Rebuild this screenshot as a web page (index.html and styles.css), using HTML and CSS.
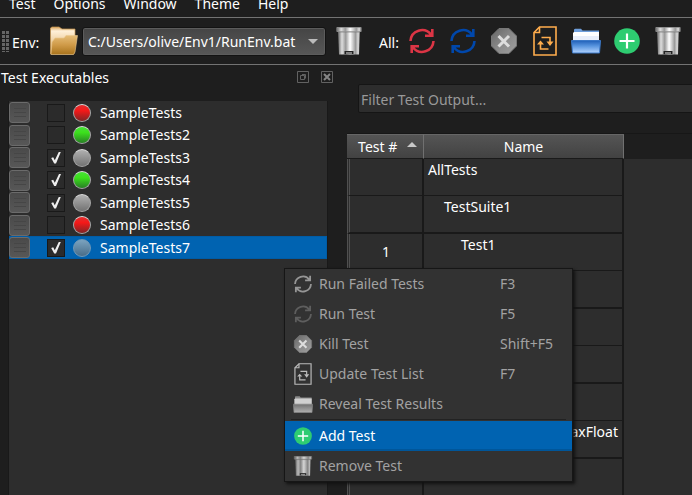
FILE: index.html
```html
<!DOCTYPE html>
<html lang="en">
<head>
<meta charset="utf-8">
<title>Test Runner</title>
<link rel="stylesheet" href="styles.css">
</head>
<body>
<svg class="defs" aria-hidden="true">
  <defs>
    <linearGradient id="metal"><stop offset="0" stop-color="#666"/><stop offset=".18" stop-color="#ddd"/><stop offset=".35" stop-color="#999"/><stop offset=".55" stop-color="#fff"/><stop offset=".8" stop-color="#999"/><stop offset=".92" stop-color="#ddd"/><stop offset="1" stop-color="#777"/></linearGradient>
    <linearGradient id="goldBack" x2="0" y2="1"><stop offset="0" stop-color="#d9a560"/><stop offset=".15" stop-color="#fff0d8"/><stop offset="1" stop-color="#d9a860"/></linearGradient>
    <linearGradient id="goldFront" x2="0" y2="1"><stop offset="0" stop-color="#e6bd78"/><stop offset=".5" stop-color="#cf9a48"/><stop offset="1" stop-color="#a8731c"/></linearGradient>
    <linearGradient id="blueFront" x2="0" y2="1"><stop offset="0" stop-color="#1f5fb8"/><stop offset=".45" stop-color="#5a96e0"/><stop offset="1" stop-color="#b4d4ff"/></linearGradient>
    <linearGradient id="grayFront" x2="0" y2="1"><stop offset="0" stop-color="#707070"/><stop offset="1" stop-color="#b0b0b0"/></linearGradient>
    <linearGradient id="stone" x2="1" y2="1"><stop offset="0" stop-color="#666"/><stop offset=".5" stop-color="#898989"/><stop offset="1" stop-color="#a0a0a0"/></linearGradient>
    <symbol id="refresh" viewBox="0 0 26 26"><g fill="none" stroke="currentColor" stroke-width="2.600"><path d="M1.500 13A11.500 11.500 0 0 1 22 6.500M23.300 1V7.800H16"/><path d="M24.500 13A11.500 11.500 0 0 1 4 19.500M2.700 25V18.200H10"/></g></symbol>
    <symbol id="kill" viewBox="0 0 26 26"><path d="M8 .5H18L25.500 8V18L18 25.500H8L.5 18V8Z" fill="url(#stone)" stroke="#777"/><path d="M7.500 8L18 18.500M18 8L7.500 18.500" stroke="#ddd" stroke-width="3"/></symbol>
    <symbol id="update" viewBox="0 0 24 30"><g fill="none" stroke="currentColor" stroke-width="1.600"><path d="M6.500 1H23V29H1V6.500Z"/><path d="M6.500 1V6.500H1"/><path d="M8.500 11.500H17V16M15.500 23H7.500V18"/></g><path d="M13.500 15.500H20.500L17 20ZM4 18.500H11L7.500 14.500Z" fill="currentColor"/></symbol>
    <symbol id="folder" viewBox="0 0 30 26"><path d="M3 5V1.500L4 .8H10L11.500 2.500H28V14H3Z" fill="#6f9fdc"/><path d="M2 5L3 4H28V14H2Z" fill="#fff"/><path d="M2 8H28V13H2Z" fill="#e8eefa"/><path d="M.5 12.500H29.500L28.500 25H1.500Z" fill="url(#blueFront)" stroke="#3b78c8"/></symbol>
    <symbol id="folder-gray" viewBox="0 0 30 26"><path d="M3 5V1.500L4 .8H10L11.500 2.500H28V14H3Z" fill="#888"/><path d="M2 5L3 4H28V14H2Z" fill="#d0d0d0"/><path d="M.5 12.500H29.500L28.500 25H1.500Z" fill="url(#grayFront)" stroke="#858585"/></symbol>
    <symbol id="add" viewBox="0 0 26 26"><circle cx="13" cy="13" r="12.800" fill="#2ecc71"/><path d="M13 5.500V20.500M5.500 13H20.500" stroke="#fff" stroke-width="2.200"/></symbol>
    <symbol id="trash" viewBox="0 0 26 28"><path d="M2 4H24L23 27.500H3Z" fill="url(#metal)"/><path d="M.8.500H25.200V4.500H.8Z" fill="url(#metal)" stroke="#aaa" stroke-width=".6"/><path d="M2 5H24" stroke="#777" stroke-width=".7"/><rect x="8.500" y="24" width="9" height="3" fill="#222"/><path d="M10 26H16" stroke="#ddd"/></symbol>
    <symbol id="open" viewBox="0 0 30 30"><path d="M1.500 28V2L3 1H10L13 3H26V9L25 28Z" fill="url(#goldBack)" stroke="#c99852" stroke-width=".7"/><path d="M3 16L6 12H15L17 9.500H28.500L26 26L24.500 28.500H2Z" fill="url(#goldFront)" stroke="#e9c88e" stroke-width=".6"/></symbol>
  </defs>
</svg>
<div class="window">
  <nav class="menubar"><a href="#">Test</a><a href="#">Options</a><a href="#">Window</a><a href="#">Theme</a><a href="#">Help</a></nav>
  <div class="toolbar" role="toolbar">
    <span class="grip"></span>
    <label class="env" for="env">Env:</label>
    <button class="tool open" aria-label="Open environment"><svg><use href="#open"/></svg></button>
    <div class="combo"><select id="env"><option>C:/Users/olive/Env1/RunEnv.bat</option></select></div>
    <button class="tool clear" aria-label="Clear environment"><svg><use href="#trash"/></svg></button>
    <span class="all">All:</span>
    <button class="tool red" aria-label="Run failed"><svg><use href="#refresh"/></svg></button>
    <button class="tool blue" aria-label="Run all"><svg><use href="#refresh"/></svg></button>
    <button class="tool" aria-label="Kill all"><svg><use href="#kill"/></svg></button>
    <button class="tool orange" aria-label="Update all"><svg class="tall"><use href="#update"/></svg></button>
    <button class="tool" aria-label="Reveal results"><svg class="wide"><use href="#folder"/></svg></button>
    <button class="tool" aria-label="Add test"><svg><use href="#add"/></svg></button>
    <button class="tool" aria-label="Remove all"><svg><use href="#trash"/></svg></button>
  </div>
  <div class="main">
    <section class="dock">
      <header class="dock-title"><h2>Test Executables</h2>
        <button class="mini" aria-label="Float"><svg viewBox="0 0 12 12"><path d="M.5.500H11.500V11.500H.5ZM3.500 4.500H7.500V8.500H3.500ZM5 3.500H8.500V7.500"/></svg></button>
        <button class="mini" aria-label="Close"><svg viewBox="0 0 12 12"><path d="M.5.500H11.500V11.500H.5Z"/><path class="cross" d="M3 3L9 9M9 3L3 9"/></svg></button>
      </header>
      <ul class="tests">
        <li><button class="handle" aria-label="Menu"></button><input type="checkbox" id="t1"><i class="ball fail"></i><label for="t1">SampleTests</label></li>
        <li><button class="handle" aria-label="Menu"></button><input type="checkbox" id="t2"><i class="ball pass"></i><label for="t2">SampleTests2</label></li>
        <li><button class="handle" aria-label="Menu"></button><input type="checkbox" id="t3" checked><i class="ball"></i><label for="t3">SampleTests3</label></li>
        <li><button class="handle" aria-label="Menu"></button><input type="checkbox" id="t4" checked><i class="ball pass"></i><label for="t4">SampleTests4</label></li>
        <li><button class="handle" aria-label="Menu"></button><input type="checkbox" id="t5" checked><i class="ball"></i><label for="t5">SampleTests5</label></li>
        <li><button class="handle" aria-label="Menu"></button><input type="checkbox" id="t6"><i class="ball fail"></i><label for="t6">SampleTests6</label></li>
        <li class="selected"><button class="handle" aria-label="Menu"></button><input type="checkbox" id="t7" checked><i class="ball chosen"></i><label for="t7">SampleTests7</label></li>
      </ul>
    </section>
    <section class="output">
      <input class="filter" type="text" aria-label="Filter Test Output" placeholder="Filter Test Output...">
      <div class="sheet">
        <table>
          <thead><tr><th class="num">Test # <span class="sort"></span></th><th class="name">Name</th></tr></thead>
          <tbody>
            <tr><td></td><td>AllTests</td></tr>
            <tr><td></td><td class="in1">TestSuite1</td></tr>
            <tr><td>1</td><td class="in2">Test1</td></tr>
            <tr><td></td><td></td></tr>
            <tr><td></td><td></td></tr>
            <tr><td></td><td></td></tr>
            <tr><td></td><td></td></tr>
            <tr><td></td><td class="end">axFloat</td></tr>
            <tr><td></td><td></td></tr>
          </tbody>
        </table>
      </div>
    </section>
  </div>
  <div class="context" role="menu">
    <button role="menuitem"><svg class="light"><use href="#refresh"/></svg><span>Run Failed Tests</span><kbd>F3</kbd></button>
    <button role="menuitem"><svg class="dim"><use href="#refresh"/></svg><span>Run Test</span><kbd>F5</kbd></button>
    <button role="menuitem"><svg><use href="#kill"/></svg><span>Kill Test</span><kbd>Shift+F5</kbd></button>
    <button role="menuitem"><svg class="page"><use href="#update"/></svg><span>Update Test List</span><kbd>F7</kbd></button>
    <button role="menuitem"><svg class="big"><use href="#folder-gray"/></svg><span>Reveal Test Results</span></button>
    <hr>
    <button role="menuitem" class="active"><svg><use href="#add"/></svg><span>Add Test</span></button>
    <button role="menuitem"><svg class="bin"><use href="#trash"/></svg><span>Remove Test</span></button>
  </div>
</div>
</body>
</html>
```
FILE: styles.css
```css
* { box-sizing: border-box; }
body { margin: 0; background: #1e1e1e; color: #fff; font: 14px/20px "Noto Sans", "Open Sans", sans-serif; }
button, input, select, kbd { font: inherit; color: inherit; }
button { padding: 0; border: 0; background: none; }
.defs { position: absolute; width: 0; height: 0; }
.window { position: relative; display: flex; flex-direction: column; height: 100vh; overflow: hidden; }

.menubar { display: flex; flex: none; gap: 18px; height: 17px; padding-left: 9px; line-height: 8px; }
.menubar a { color: inherit; text-decoration: none; }

.toolbar { display: flex; flex: none; align-items: center; height: 48px; border-top: 1px solid #737373; border-bottom: 1px solid #737373; }
.grip { flex: none; width: 7px; height: 21px; margin: 0 3px 0 2px; background: repeating-linear-gradient(#1e1e1e00 0 3px, #1e1e1e 3px 4px), repeating-linear-gradient(90deg, #666 0 3px, #1e1e1e 3px 4px); }
.env { flex: none; width: 34px; padding-top: 3px; }
.tool { display: flex; flex: none; align-items: center; justify-content: center; width: 41px; height: 40px; }
.tool svg { width: 26px; height: 28px; }
.tool .tall { width: 24px; height: 30px; }
.tool .wide { width: 30px; height: 26px; }
.tool.open svg { width: 30px; height: 30px; }
.tool.open { width: 36px; }
.combo { position: relative; width: 244px; flex: none; }
.combo select { display: block; appearance: none; width: 100%; height: 29px; padding: 1px 24px 0 5px; border: 1px solid #131313; border-radius: 3px; background: linear-gradient(#454545, #575757); box-shadow: inset 0 0 0 1px #5c5c5c; }
.combo::after { content: ""; position: absolute; right: 8px; top: 12px; border: 5px solid transparent; border-top-color: #bbb; border-bottom: 0; }
.tool.clear { width: 46px; }
.all { flex: none; width: 29px; padding: 3px 0 0 7px; }
.red { color: #dc3545; }
.blue { color: #0047ab; }
.orange { color: #ffad4d; }

.main { display: flex; flex: 1; min-height: 0; }
.dock { display: flex; flex-direction: column; flex: 0 0 328px; padding-left: 8px; }
.dock-title { display: flex; align-items: center; gap: 12px; height: 36px; padding: 0 0 12px; margin: 0 -5px 0 -7px; }
.dock-title h2 { flex: 1; margin: 0; padding-top: 1px; font-size: 14px; font-weight: 400; }
.mini { width: 12px; height: 12px; }
.mini svg { display: block; fill: none; stroke: #626262; }
.mini .cross { stroke: #858585; stroke-width: 2; }

.tests { flex: 1; margin: 0; list-style: none; padding: 0; background: #2d2d2d; border: 1px solid #191919; border-top: 0; border-bottom: 0; }
.tests li { display: flex; align-items: center; height: 22px; }
.tests li:nth-child(odd) { height: 23px; }
.tests .selected { background: #0063b1; box-shadow: inset 0 0 0 1px #005ca6; }
.handle { width: 21px; height: 21px; margin-right: 17px; border: 1px solid #6b6b6b; border-radius: 3px; background: linear-gradient(#464646, #464646) center 5px / 12px 1px no-repeat, linear-gradient(#464646, #464646) center 9px / 12px 1px no-repeat, linear-gradient(#464646, #464646) center 13px / 12px 1px no-repeat, linear-gradient(#4a4a4a, #575757); }
.tests input { appearance: none; flex: none; display: grid; place-items: center; width: 18px; height: 18px; margin: 0 8px 0 0; border: 1px solid #191919; background: #2b2b2b; }
.tests input:checked::before { content: ""; width: 10px; height: 12px; background: #eee; clip-path: polygon(2% 55%, 22% 48%, 38% 72%, 80% 0, 100% 0, 50% 100%, 32% 100%); }
.ball { width: 18px; height: 18px; margin-right: 9px; border: 1px solid #a5a5a5; border-top-color: #ddd; border-radius: 50%; background: linear-gradient(#b4b4b4, #6f6f6f) border-box; }
.fail { background: linear-gradient(#e03030, #f51818 35%, #7f2525); }
.pass { background: linear-gradient(#48e038, #3ce01c 35%, #288025); }
.chosen { border-color: #7198b6; background: linear-gradient(#7ba3bf, #496d89); }

.output { display: flex; flex: 1; flex-direction: column; min-width: 0; padding: 19px 0 0 19px; }
.filter { flex: none; height: 29px; margin: 0 -4px 0 11px; padding: 1px 3px 0 2px; border: 1px solid #151515; border-radius: 2px; background: #2d2d2d; outline: 0; }
.filter::placeholder { color: #999; opacity: 1; }
.sheet { flex: 1; margin-top: 20px; border-top: 1px solid #171717; background: linear-gradient(#1e1e1e 25px, #2d2d2d 0); overflow: hidden; }
table { width: 277px; table-layout: fixed; border-collapse: separate; border-spacing: 0; }
th { height: 25px; padding: 0; font-weight: 400; background: linear-gradient(#555, #424242); border-top: 1px solid #666; border-bottom: 1px solid #1a1a1a; border-right: 1px solid #707070; }
.num { width: 77px; padding-left: 5px; }
.sort { display: inline-block; margin: 0 0 5px 6px; border: 5px solid transparent; border-bottom-color: #c8c8c8; border-top: 0; }
td { height: 37px; padding: 1px 4px 0; border-bottom: 1px solid #191919; border-right: 2px solid #191919; line-height: 20px; vertical-align: top; white-space: nowrap; }
tbody tr:nth-child(even) td { height: 38px; border-bottom-width: 2px; }
td:first-child { padding-top: 0; text-align: center; vertical-align: middle; border-left: 3px double #505050; }
td.in1 { padding-left: 20px; }
td.in2 { padding-left: 37px; }
.end { text-align: right; }

.context { position: absolute; left: 284px; top: 268px; width: 289px; border: 1px solid #161616; background: #323232; color: #a2a2a2; box-shadow: 2px 2px 3px #111; }
.context button { display: flex; align-items: center; width: 100%; height: 30px; padding-left: 8px; text-align: left; }
.context svg { width: 20px; height: 18px; }
.context .big { height: 19px; }
.context .bin { height: 20px; opacity: .8; }
.context .page { height: 22px; color: #bbb; }
.context .light { color: #969696; }
.context .dim { color: #5e5e5e; }
.context span { flex: 1; padding-left: 6px; }
.context kbd { width: 72px; }
.context hr { height: 1px; margin: 0 6px 1px; border: 0; background: #222; }
.context .active { background: #0063b1; color: #fff; box-shadow: inset 0 -2px #00569a; }
```
